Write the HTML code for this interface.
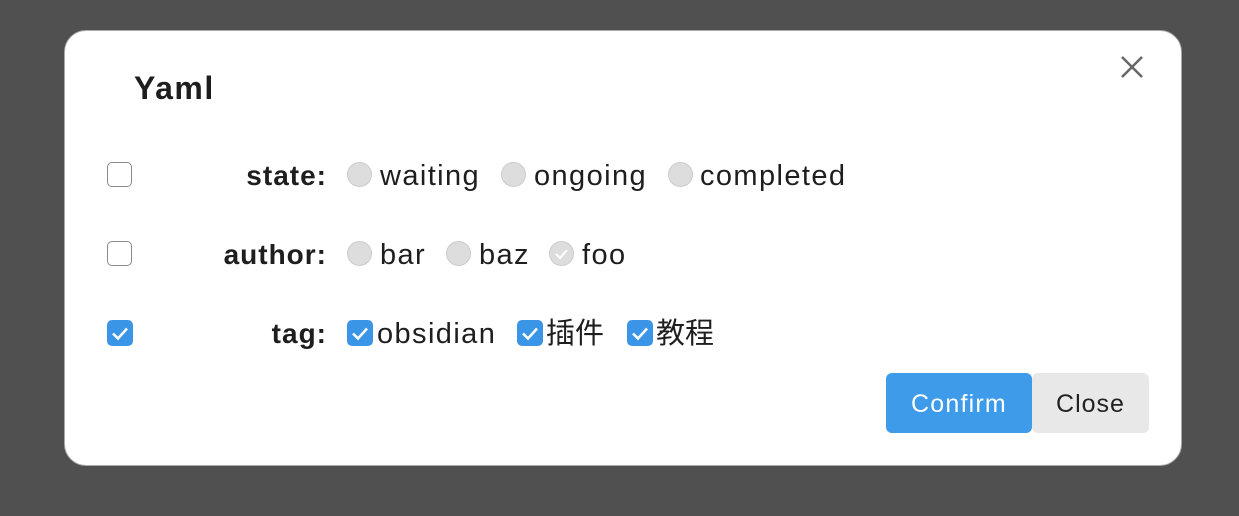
<!DOCTYPE html><html><head><style>
body{margin:0;width:1239px;height:516px;background:#505050;font-family:"Liberation Sans","Noto Sans CJK SC",sans-serif;position:relative;overflow:hidden}
.m{position:absolute;left:64px;top:30px;width:1116px;height:434px;background:#fff;border:1px solid #aaa;border-radius:22px}
.a{position:absolute;white-space:nowrap;color:#1e1e1e;font-size:29px;line-height:30px;letter-spacing:1.4px}
.cb{position:absolute;width:23px;height:23px;border:1.5px solid #8a8a8a;border-radius:5px;box-sizing:content-box}
.ck{position:absolute;width:26px;height:26px;background:#3a95e6;border-radius:5px}
.r{position:absolute;width:23px;height:23px;border:1.5px solid #ccc;background:#ddd;border-radius:50%}
.lab{position:absolute;right:912px;font-weight:bold;font-size:28px;color:#1e1e1e;line-height:30px;letter-spacing:1px}
</style></head><body>
<div class="m"></div>
<div class="a" style="left:134px;top:73px;font-weight:bold;font-size:32px;letter-spacing:1.5px">Yaml</div>
<svg style="position:absolute;left:1120px;top:55px" width="24" height="24"><path d="M2 2L22 22M22 2L2 22" stroke="#666" stroke-width="2.5"/></svg>
<div class="cb" style="left:107px;top:162px"></div>
<div class="cb" style="left:107px;top:241px"></div>
<div class="ck" style="left:107px;top:320px"><svg width="26" height="26"><path d="M6 13.5l5 5 9-10" stroke="#fff" stroke-width="2.5" fill="none"/></svg></div>
<div class="lab" style="top:161px">state:</div>
<div class="lab" style="top:240px">author:</div>
<div class="lab" style="top:319px">tag:</div>
<div class="r" style="left:347px;top:162px"></div><div class="a" style="left:380px;top:161px">waiting</div>
<div class="r" style="left:501px;top:162px"></div><div class="a" style="left:534px;top:161px">ongoing</div>
<div class="r" style="left:668px;top:162px"></div><div class="a" style="left:700px;top:161px">completed</div>
<div class="r" style="left:347px;top:241px"></div><div class="a" style="left:380px;top:240px">bar</div>
<div class="r" style="left:446px;top:241px"></div><div class="a" style="left:479px;top:240px">baz</div>
<div class="r" style="left:549px;top:241px"><svg width="23" height="23"><path d="M6 12l4 4 7-8" stroke="#fff" stroke-width="2" fill="none"/></svg></div><div class="a" style="left:582px;top:240px">foo</div>
<div class="ck" style="left:347px;top:320px"><svg width="26" height="26"><path d="M6 13.5l5 5 9-10" stroke="#fff" stroke-width="2.5" fill="none"/></svg></div><div class="a" style="left:377px;top:319px">obsidian</div>
<div class="ck" style="left:517px;top:320px"><svg width="26" height="26"><path d="M6 13.5l5 5 9-10" stroke="#fff" stroke-width="2.5" fill="none"/></svg></div><div class="a" style="left:546px;top:319px;letter-spacing:0">插件</div>
<div class="ck" style="left:627px;top:320px"><svg width="26" height="26"><path d="M6 13.5l5 5 9-10" stroke="#fff" stroke-width="2.5" fill="none"/></svg></div><div class="a" style="left:656px;top:319px;letter-spacing:0">教程</div>
<div style="position:absolute;left:886px;top:373px;width:146px;height:60px;background:#3d9be9;border-radius:6px;color:#fff;font-size:25px;line-height:62px;text-align:center;letter-spacing:1.2px">Confirm</div>
<div style="position:absolute;left:1032px;top:373px;width:117px;height:60px;background:#e8e8e8;border-radius:6px;color:#222;font-size:25px;line-height:62px;text-align:center;letter-spacing:1px">Close</div>
</body></html>
